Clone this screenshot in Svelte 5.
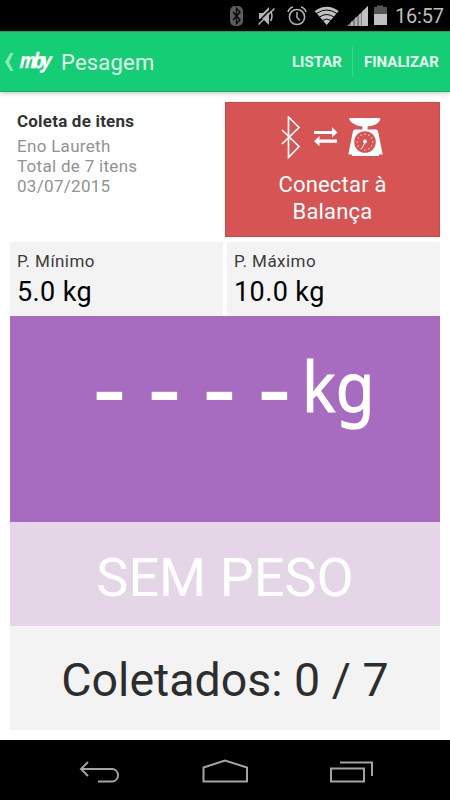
<script>
    let person = $state('Eno Laureth');
    let date = $state('03/07/2015');
    let total = $state(7);
    let collected = $state(0);
    let limits = $state([
        { label: 'P. Mínimo', value: '5.0 kg' },
        { label: 'P. Máximo', value: '10.0 kg' }
    ]);

    const ticks = Array.from({ length: 12 }, (_, i) => i * 30);
</script>

<div class="screen">
    <div class="status_bar">
        <svg width="166" height="31" viewBox="0 0 166 31">
            <rect x="0" y="6" width="13" height="20" rx="5" fill="#5c5c5c" />
            <path d="M3 12l7 8-3.5 3.5v-15L10 12l-7 8" fill="none" stroke="#080808" stroke-width="1.4" />
            <path d="M29 13h4l6-6v18l-6-6h-4z" fill="#b5b5b5" />
            <path d="M40.500 11q3 5 0 10" fill="none" stroke="#b5b5b5" stroke-width="1.500" />
            <path d="M27 23L43 7" stroke="#000" stroke-width="1.500" />
            <path d="M28.500 24.500L44.500 8.500" stroke="#b5b5b5" stroke-width="1.500" />
            <g fill="none" stroke="#b5b5b5" stroke-width="1.500">
                <circle cx="67" cy="17" r="7.600" />
                <path d="M67 12v5.500l3 3M58 12q1-4 5-5M76 12q-1-4-5-5" />
            </g>
            <path d="M96.700 25L84.700 11q12-8.500 24 0z" fill="#c1c1c1" />
            <g fill="none" stroke="#000" stroke-width="1">
                <path d="M86.500 13.500q10.200-7 20.400 0M89.500 17q7.200-5 14.400 0M92.500 20.500q4.200-3 8.400 0" />
            </g>
            <path d="M117 26L138 6v20z" fill="#858585" />
            <path d="M122 26v-4.500M126 26v-8.500M130 26v-12" stroke="#b5b5b5" stroke-width="2" />
            <path d="M132 26V12l6-6v20z" fill="#c1c1c1" />
            <path d="M144 7h3V5.500h6V7h4v7h-13z" fill="#555" />
            <path d="M144 14h13v11h-13z" fill="#c1c1c1" />
        </svg>
        <span class="clock">16:57</span>
    </div>

    <header class="action_bar">
        <svg class="back" width="9" height="20" viewBox="0 0 9 20">
            <path d="M5.500 1h3L4 10l4.500 9h-3L0 10z" fill="#8ce8b9" />
        </svg>
        <span class="logo">mby</span>
        <h1>Pesagem</h1>
        <button class="list">LISTAR</button>
        <button class="finish">FINALIZAR</button>
    </header>

    <main>
        <section class="top">
            <div class="info">
                <h2>Coleta de itens</h2>
                <p class="person">{person}</p>
                <p class="total">Total de {total} itens</p>
                <p class="date">{date}</p>
            </div>
            <button class="connect">
                <svg width="103" height="44" viewBox="0 0 103 44">
                    <path d="M1 14l17 16.500-10.500 11V1L18 11.500 1 28" fill="none" stroke="#fff" stroke-width="1.700" />
                    <path d="M33 15h18v-4l5.500 5.500-5.500 5V18H33zM56 23.500H38.500v-3.500L33 25.300l5.500 5v-3.500H56z" fill="#fff" />
                    <path d="M68 2h31.500q-.5 4-5 6.500-3.500 1.500-8 2v3H95q1.500 0 2 1.500l4.500 22.500v1H98V40H71v-1.500h-3.500v-1L72 15q.5-1.500 2-1.500h7.500v-3q-5-.5-8.500-2.500-4.500-2.500-5-6z" fill="#fff" />
                    <circle cx="84" cy="26" r="10.800" fill="#d65454" />
                    {#each ticks as angle}
                        <path d="M84 17.500v1.500" stroke="#fff" stroke-width=".8" transform="rotate({angle} 84 26)" />
                    {/each}
                    <circle cx="84" cy="25.500" r="1.900" fill="#fff" />
                    <path d="M84.500 25.500L80.500 33" stroke="#fff" stroke-width="1" />
                </svg>
                <span class="line1">Conectar à</span>
                <span class="line2">Balança</span>
            </button>
        </section>

        <section class="limits">
            {#each limits as limit}
                <div class="limit">
                    <span class="label">{limit.label}</span>
                    <span class="value">{limit.value}</span>
                </div>
            {/each}
        </section>

        <section class="weight">
            <span class="digits">
                {#each [0, 1, 2, 3] as n}
                    <span class="dash">-</span>
                {/each}
            </span>
            <span class="unit">kg</span>
        </section>
        <section class="state"><span>SEM PESO</span></section>
        <section class="collected"><span>Coletados: {collected} / {total}</span></section>
    </main>

    <nav>
        <svg width="450" height="60" viewBox="0 0 450 60" fill="none" stroke="#a3a3a3" stroke-width="2">
            <path d="M88 22l-7 7 7 7M81 29h31.500a6.300 6.300 0 0 1 0 12.500H98" />
            <path d="M203.500 27.500L225 20.500l22 7v14h-43.500z" />
            <path d="M331 28.500h33v13h-33zM340 22.500h32V36" />
        </svg>
    </nav>
</div>

<style>
    :global(body) {
        margin: 0;
    }

    .screen {
        width: 450px;
        height: 800px;
        display: flex;
        flex-direction: column;
        overflow: hidden;
        background: #fff;
        font-family: Roboto, sans-serif;
    }

    h1, h2, p {
        margin: 0;
        font-weight: 400;
    }

    button {
        border: 0;
        padding: 0;
        background: none;
        font-family: inherit;
        color: #fff;
    }

    span, h1, h2, p, button {
        white-space: nowrap;
    }

    svg {
        display: block;
        flex: none;
    }

    .status_bar {
        height: 31px;
        display: flex;
        align-items: center;
        background: #000;
        padding-left: 230px;
        flex: none;
    }

    .clock {
        font-size: 20px;
        line-height: 31px;
        padding-top: 2px;
        margin-left: -1px;
        letter-spacing: -0.2px;
        color: #bdbdbd;
    }

    .action_bar {
        height: 61px;
        box-sizing: border-box;
        flex: none;
        display: flex;
        align-items: center;
        padding-left: 5px;
        background: #15cd74;
        border-top: 1px solid #12a35d;
        border-bottom: 1px solid #10b163;
        box-shadow: 0 1px 5px rgba(0, 0, 0, 0.25);
    }

    .logo {
        width: 33px;
        margin-left: 6px;
        font-family: "Liberation Sans", sans-serif;
        font-size: 22px;
        line-height: 24px;
        font-weight: 700;
        font-style: italic;
        letter-spacing: -3px;
        color: #fff;
        transform: translateY(-1px) scaleX(0.8) skewX(-6deg);
        transform-origin: left;
        -webkit-text-stroke: 0.5px #fff;
    }

    h1 {
        width: 231px;
        margin-left: 8px;
        padding-top: 1px;
        font-size: 22px;
        letter-spacing: 0.2px;
        color: #e3f8ed;
    }

    .list, .finish {
        font-size: 15px;
        font-weight: 700;
        color: #e9faf1;
        text-align: left;
    }

    .list {
        width: 61px;
        height: 30px;
        box-sizing: border-box;
        border-right: 1px solid #3dd78c;
    }

    .finish {
        margin-left: 11px;
    }

    main {
        flex: 1;
        padding: 10px;
        display: flex;
        flex-direction: column;
    }

    .top {
        height: 135px;
        display: flex;
        margin-bottom: 5px;
    }

    .info {
        width: 208px;
        padding: 9px 0 0 7px;
        font-size: 17px;
        line-height: 20px;
        letter-spacing: 0.3px;
        color: #929292;
    }

    .info h2 {
        font-size: 17px;
        line-height: 20px;
        letter-spacing: 0.2px;
        margin-bottom: 5px;
        font-weight: 700;
        color: #333;
    }

    .connect {
        width: 215px;
        display: flex;
        flex-direction: column;
        align-items: center;
        background: #d65454;
        box-shadow: inset 0 0 0 1px #d04646;
        font-size: 22px;
        line-height: 27px;
        letter-spacing: 0.2px;
    }

    .connect svg {
        margin: 14px 0 11px;
    }

    .limits {
        display: flex;
        gap: 4px;
        height: 74px;
    }

    .limit {
        flex: 1;
        padding: 8px 7px 0;
        box-sizing: border-box;
        display: flex;
        flex-direction: column;
        background: #f3f3f3;
    }

    .label {
        font-size: 17px;
        line-height: 22px;
        letter-spacing: 0.45px;
        color: #3c3c3c;
    }

    .value {
        font-size: 27px;
        line-height: 41px;
        letter-spacing: 0.4px;
        color: #000;
    }

    .weight {
        height: 206px;
        box-sizing: border-box;
        padding: 21px 0 0 72px;
        display: flex;
        align-items: flex-start;
        background: #a76bbf;
        color: #fff;
        font-family: "Noto Sans", "Open Sans", sans-serif;
        font-size: 70px;
        line-height: 96px;
    }

    .digits {
        display: flex;
        margin-top: -2px;
    }

    .dash {
        width: 55px;
        text-align: center;
        transform: scale(1.5, 1.5);
    }

    .unit {
        transform: scaleX(0.9);
        transform-origin: left;
        -webkit-text-stroke: 1px #fff;
    }

    .state, .collected {
        height: 104px;
        display: flex;
        align-items: center;
        justify-content: center;
        box-sizing: border-box;
    }

    .state {
        padding-top: 6px;
        background: #e4d6e7;
        color: #fff;
        font-size: 54px;
    }

    .collected {
        padding-top: 3px;
        background: #f3f3f3;
        color: #2d2d2d;
        font-size: 46.500px;
    }

    nav {
        height: 60px;
        flex: none;
        background: #000;
    }
</style>
